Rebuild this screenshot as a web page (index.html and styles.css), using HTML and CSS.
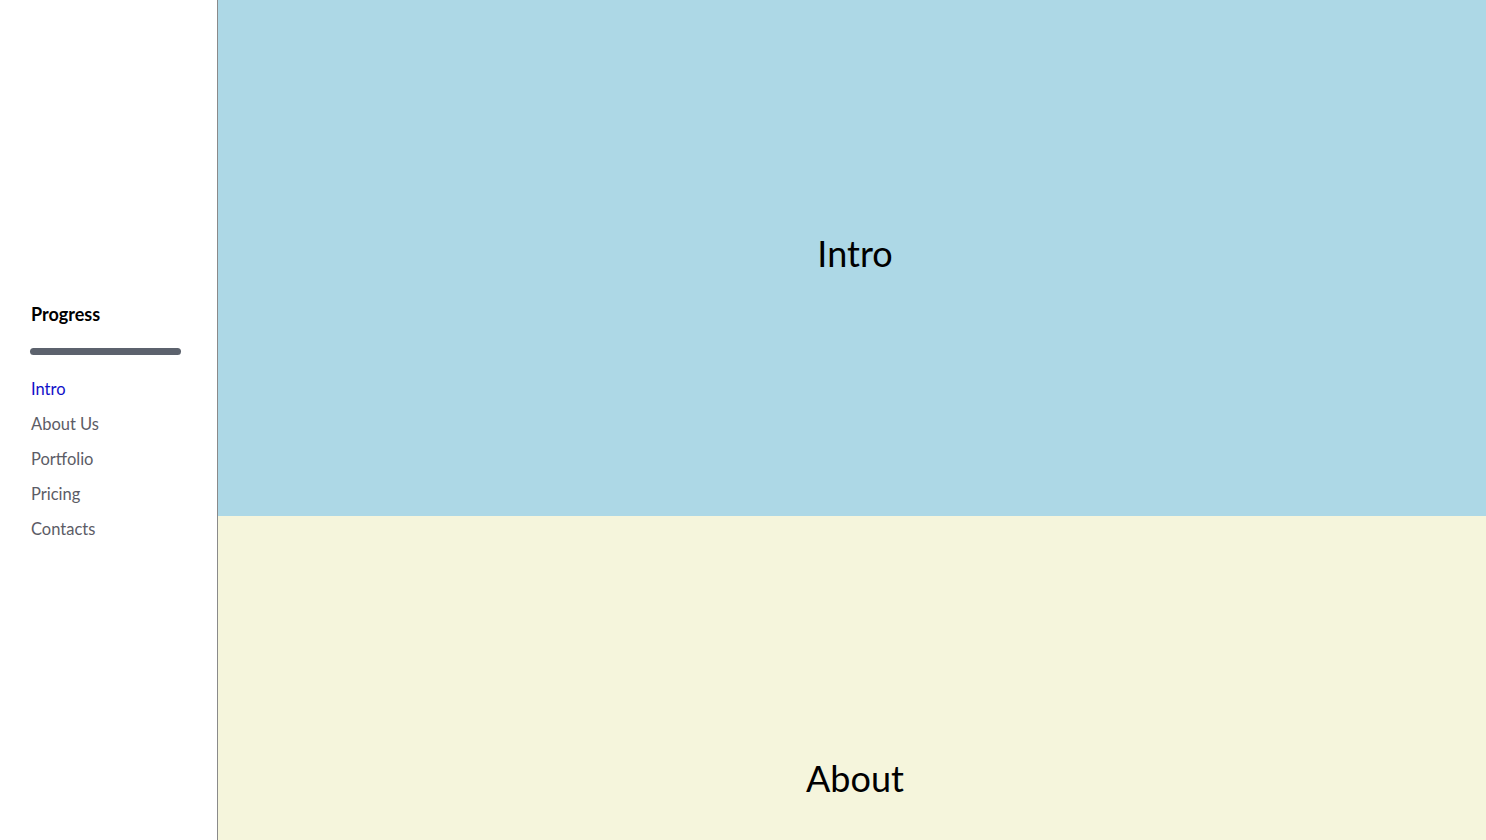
FILE: index.html
```html
<!DOCTYPE html>
<html lang="en">
<head>
<meta charset="utf-8">
<title>Progress</title>
<link rel="stylesheet" href="styles.css">
</head>
<body>
<div class="layout">
  <aside class="sidebar">
    <div class="sidebar-inner">
      <h2 class="progress-title">Progress</h2>
      <div class="progress-bar"></div>
      <nav class="nav">
        <a class="nav-link active" href="#intro">Intro</a>
        <a class="nav-link" href="#about">About Us</a>
        <a class="nav-link" href="#portfolio">Portfolio</a>
        <a class="nav-link" href="#pricing">Pricing</a>
        <a class="nav-link" href="#contacts">Contacts</a>
      </nav>
    </div>
  </aside>
  <main class="main">
    <section class="section section-intro" id="intro"><h1 class="section-title">Intro</h1></section>
    <section class="section section-about" id="about"><h1 class="section-title">About</h1></section>
  </main>
</div>
</body>
</html>
```

FILE: styles.css
```css
html, body {
  margin: 0;
  padding: 0;
  height: 100%;
  overflow: hidden;
}
body {
  font-family: Lato, "Open Sans", sans-serif;
  background: #fff;
}
.layout {
  display: flex;
  height: 840px;
  overflow: hidden;
}
.sidebar {
  width: 217px;
  flex: 0 0 217px;
  border-right: 1px solid #8a8a8a;
  display: flex;
  flex-direction: column;
  justify-content: center;
  box-sizing: content-box;
}
.sidebar-inner {
  padding: 0 36px 0 30px;
  margin-top: 10px;
}
.progress-title {
  margin: 0;
  font-size: 18px;
  font-weight: 700;
  line-height: 22px;
  color: #000;
  padding-left: 1px;
}
.progress-bar {
  margin-top: 22.5px;
  width: 151px;
  height: 7px;
  border-radius: 4px;
  background: #5c626d;
}
.nav {
  display: flex;
  flex-direction: column;
  margin-top: 17.5px;
  padding-left: 1px;
}
.nav-link {
  font-size: 16.5px;
  line-height: 35px;
  color: #5c5c66;
  text-decoration: none;
}
.nav-link.active {
  color: #1010c8;
}
.main {
  flex: 1;
  display: flex;
  flex-direction: column;
}
.section {
  height: 516px;
  flex: 0 0 516px;
  box-sizing: border-box;
  display: flex;
  align-items: center;
  justify-content: center;
}
.section-intro {
  background: #add8e6;
  padding: 0 0 11px 6px;
}
.section-about {
  background: #f5f5dc;
  padding: 8px 0 0 6px;
}
.section-title {
  margin: 0;
  font-size: 36px;
  font-weight: 400;
  color: #000;
}
```
